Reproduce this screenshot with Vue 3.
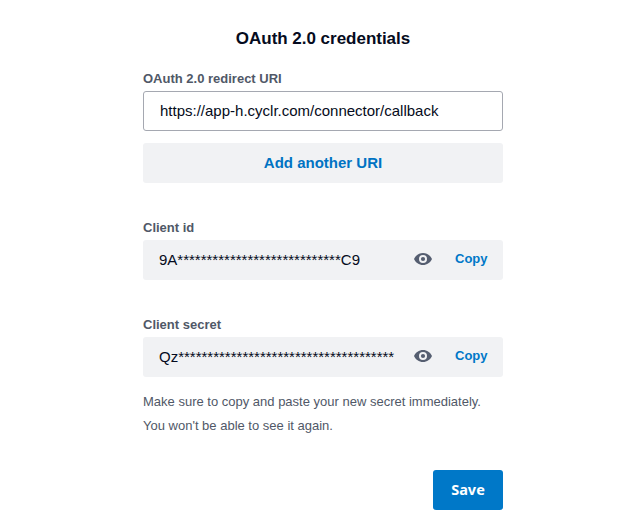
<script setup>
import { ref } from 'vue'

const redirectUri = ref('https://app-h.cyclr.com/connector/callback')
const credentials = [
  { label: 'Client id', value: '9A' + '*'.repeat(28) + 'C9' },
  { label: 'Client secret', value: 'Qz' + '*'.repeat(37) },
]
</script>

<template>
  <main class="page">
    <form class="form" @submit.prevent>
      <h1 class="title">OAuth 2.0 credentials</h1>
      <label class="label uri-label" for="uri">OAuth 2.0 redirect URI</label>
      <input id="uri" v-model="redirectUri" class="input" type="text" />
      <button class="add" type="button">Add another URI</button>

      <section v-for="item in credentials" :key="item.label" class="credential">
        <div class="label">{{ item.label }}</div>
        <div class="field">
          <span class="value">{{ item.value }}</span>
          <button class="reveal" type="button" aria-label="Show">
            <svg class="eye" viewBox="0 0 18 12">
              <path fill-rule="evenodd" d="M9 0C5 0 1.600 2.500 0 6c1.600 3.500 5 6 9 6s7.400-2.500 9-6c-1.600-3.500-5-6-9-6Zm0 10a4 4 0 1 1 0-8 4 4 0 0 1 0 8Z" />
              <circle cx="9" cy="6" r="2.100" />
            </svg>
          </button>
          <button class="copy" type="button">Copy</button>
        </div>
      </section>

      <p class="note">Make sure to copy and paste your new secret immediately.<br />You won't be able to see it again.</p>
      <button class="save" type="submit">Save</button>
    </form>
  </main>
</template>

<style>
body {
  background: #fff;
}
</style>

<style scoped>
.page {
  display: flex;
  padding: 28px 120px 0 143px;
  font-family: "Liberation Sans", Arial, sans-serif;
}

.form {
  display: flex;
  flex-direction: column;
  width: 360px;
}

button {
  padding: 0;
  border: 0;
  background: none;
  font-family: inherit;
}

.title {
  margin: 0;
  color: #050b20;
  font-size: 17px;
  font-weight: 700;
  line-height: 21px;
  letter-spacing: -0.02px;
  text-align: center;
}

.label {
  height: 20px;
  margin-bottom: 2px;
  color: #505867;
  font-size: 13px;
  font-weight: 700;
  line-height: 20px;
}

.uri-label {
  margin: 20px 0 2px;
}

.input {
  box-sizing: border-box;
  width: 360px;
  height: 40px;
  padding: 0 16px 2px;
  border: 1px solid #a5a8b1;
  border-radius: 3px;
  outline: 0;
  background: #fff;
  color: #050b20;
  font-family: inherit;
  font-size: 15px;
}

.add {
  height: 40px;
  margin-top: 12px;
  padding-bottom: 2px;
  border-radius: 3px;
  background: #f1f2f4;
  color: #0073c3;
  font-size: 15px;
  font-weight: 700;
}

.credential {
  margin-top: 35px;
}

.field {
  display: flex;
  align-items: center;
  height: 40px;
  padding-left: 16px;
  border-radius: 3px;
  background: #f1f2f4;
}

.value {
  width: 255px;
  color: #050b20;
  font-size: 15px;
  line-height: 20px;
  white-space: nowrap;
}

.reveal {
  display: flex;
  width: 18px;
  height: 12px;
  margin-bottom: 2px;
}

.eye {
  width: 18px;
  height: 12px;
  fill: #555e70;
}

.copy {
  margin: 0 0 3px 23px;
  color: #0078c8;
  font-size: 13px;
  font-weight: 700;
  line-height: 20px;
}

.note {
  margin: 13px 0 0;
  color: #505867;
  font-size: 13px;
  line-height: 24px;
}

.save {
  align-self: flex-end;
  width: 70px;
  height: 40px;
  margin-top: 32px;
  padding-bottom: 2px;
  border-radius: 3px;
  background: #0078c8;
  color: #fff;
  font-family: "Noto Sans", "Open Sans", sans-serif;
  font-size: 14.500px;
  font-weight: 700;
}
</style>
